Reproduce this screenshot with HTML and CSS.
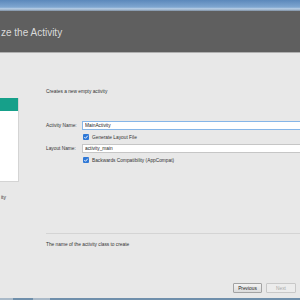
FILE: index.html
```html
<!DOCTYPE html>
<html lang="en">
<head>
    <meta charset="UTF-8">
    <meta name="viewport" content="width=device-width, initial-scale=1.0">
    <title>Customize the Activity</title>
    <link rel="stylesheet" href="styles.css">
</head>
<body>
    <div class="window">
        <div class="titlebar"></div>

        <div class="header">
            <h1 class="title">ze the Activity</h1>
        </div>

        <div class="content">
            <div class="gallery">
                <div class="template-card">
                    <div class="card-head"></div>
                </div>
                <div class="template-label">ity</div>
            </div>

            <div class="form">
                <p class="desc">Creates a new empty activity</p>

                <div class="fields">
                    <div class="row">
                        <label class="label">Activity Name:</label>
                        <input class="input input-focus" type="text" value="MainActivity">
                    </div>
                    <div class="row row-check">
                        <span class="box">
                            <svg viewBox="0 0 6 6" width="6" height="6"><path d="M1.3 3.1 L2.5 4.3 L4.8 1.7" fill="none" stroke="#fff" stroke-width="0.9"/></svg>
                        </span>
                        <span>Generate Layout File</span>
                    </div>
                    <div class="row">
                        <label class="label">Layout Name:</label>
                        <input class="input" type="text" value="activity_main">
                    </div>
                    <div class="row row-check">
                        <span class="box">
                            <svg viewBox="0 0 6 6" width="6" height="6"><path d="M1.3 3.1 L2.5 4.3 L4.8 1.7" fill="none" stroke="#fff" stroke-width="0.9"/></svg>
                        </span>
                        <span>Backwards Compatibility (AppCompat)</span>
                    </div>
                </div>

                <div class="divider"></div>
                <p class="help">The name of the activity class to create</p>
            </div>
        </div>

        <div class="buttons">
            <button class="btn">Previous</button>
            <button class="btn btn-disabled">Next</button>
            <button class="btn" aria-label="Cancel"></button>
        </div>

        <div class="taskbar">
            <span class="task task-start"></span>
            <span class="task task-open"></span>
        </div>
    </div>
</body>
</html>
```

FILE: styles.css
```css
* {
    margin: 0;
    padding: 0;
    box-sizing: border-box;
}

body {
    font-family: "Liberation Sans", Arial, sans-serif;
    background-color: #e8e8e8;
    width: 300px;
    height: 300px;
    overflow: hidden;
}

.window {
    width: 300px;
    height: 300px;
    display: flex;
    flex-direction: column;
    overflow: hidden;
}

.titlebar {
    height: 11px;
    background: linear-gradient(to bottom, #5b88bb 0%, #7fa6d0 65%, #b9cfe6 80%, #7d8fa3 100%);
}

.header {
    height: 42px;
    background-color: #5f5f5f;
    border-bottom: 1px solid #b0b0b0;
    display: flex;
    align-items: center;
}

.title {
    font-size: 10px;
    font-weight: normal;
    color: #dadada;
    white-space: nowrap;
    margin-left: 1px;
    margin-top: 1px;
}

.content {
    flex: 1;
    display: flex;
}

.gallery {
    width: 19px;
    padding-top: 45px;
}

.template-card {
    height: 84px;
    background-color: #fff;
    border-right: 1px solid #d4d4d4;
    border-bottom: 1px solid #d4d4d4;
}

.card-head {
    height: 13px;
    background-color: #16a08a;
}

.template-label {
    margin-top: 12px;
    padding-left: 1px;
    font-size: 5px;
    color: #333;
    white-space: nowrap;
}

.form {
    flex: 1;
    padding-left: 27px;
    padding-top: 36px;
    font-size: 4.8px;
    color: #333;
}

.desc {
    height: 6px;
    line-height: 6px;
}

.fields {
    margin-top: 26px;
    margin-right: -4px;
    display: flex;
    flex-direction: column;
    gap: 4px;
}

.row {
    display: flex;
    align-items: center;
    height: 9px;
}

.row-check {
    height: 6px;
    padding-left: 37px;
    gap: 3px;
    white-space: nowrap;
}

.label {
    width: 36px;
    flex-shrink: 0;
}

.input {
    flex: 1;
    min-width: 0;
    height: 9px;
    border: 1px solid #c6c6c6;
    background-color: #fff;
    font-family: "Liberation Sans", Arial, sans-serif;
    font-size: 4.8px;
    color: #222;
    padding: 0 2px;
    outline: none;
}

.input-focus {
    border-color: #86b6e8;
}

.box {
    width: 6px;
    height: 6px;
    border-radius: 1px;
    background-color: #2f78d6;
    display: flex;
}

.divider {
    margin-top: 70px;
    height: 1px;
    background-color: #d4d4d4;
}

.help {
    margin-top: 8px;
    height: 6px;
    line-height: 6px;
}

.buttons {
    height: 16px;
    display: flex;
    gap: 4px;
    padding-left: 233px;
    padding-top: 1px;
}

.btn {
    width: 29px;
    height: 10px;
    flex-shrink: 0;
    border: 1px solid #a3a3a3;
    border-radius: 1px;
    background: linear-gradient(to bottom, #f2f2f2, #dcdcdc);
    font-family: "Liberation Sans", Arial, sans-serif;
    font-size: 4.8px;
    color: #222;
}

.btn-disabled {
    width: 30px;
    border-color: #c8c8c8;
    background: #ececec;
    color: #a8a8a8;
}

.taskbar {
    height: 2px;
    background-color: #6f8fab;
    display: flex;
}

.task {
    height: 2px;
    background-color: #a9b9c8;
}

.task-start {
    width: 13px;
}

.task-open {
    width: 17px;
    margin-left: 20px;
}
```
